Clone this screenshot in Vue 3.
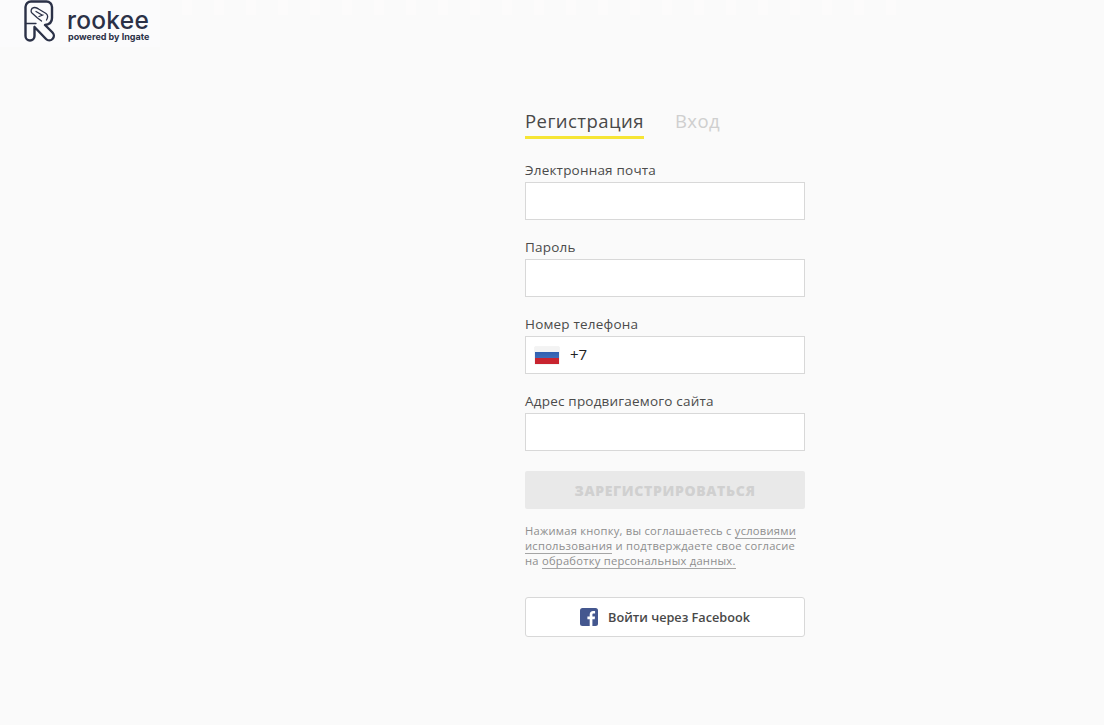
<script setup>
const fields = [
  { label: 'Электронная почта' },
  { label: 'Пароль' },
  { label: 'Номер телефона', phone: true },
  { label: 'Адрес продвигаемого сайта' }
]
</script>

<template>
  <div class="page">
    <div class="stripes"></div>
    <header class="logo">
      <svg class="mark" width="32" height="43" viewBox="0 0 32 43" fill="none" stroke="#2b3147" stroke-width="2.400" stroke-linecap="round" stroke-linejoin="round">
        <path d="M10.500 27V36a4.500 4.500 0 0 1-9 0V7A5.500 5.500 0 0 1 7 1.500H22.500A5.500 5.500 0 0 1 28 7V18c0 4-2.500 6.500-7 7l7.500 7.500a4.500 4.500 0 0 1-6.500 6.500L10.500 27"/>
        <path d="M8 8.500c2-1.500 5-.8 7 .8l7 4.200c2 1.500 2 4 .5 6.500M8 8.500c-1.500 2-1 4 .5 5l5 4.500 4 3" stroke-width="1.300"/>
        <path d="M12 11.500l6 3.500M15 16.500l4-1.500M1.500 23.500H12" stroke-width="1.300"/>
      </svg>
      <div class="brand">
        <div class="word">rookee</div>
        <div class="sub">powered by Ingate</div>
      </div>
    </header>

    <main class="form">
      <nav class="tabs">
        <span class="tab active">Регистрация</span>
        <span class="tab">Вход</span>
      </nav>

      <div v-for="f in fields" :key="f.label" class="field">
        <div class="label">{{ f.label }}</div>
        <div class="input" :class="{ phone: f.phone }">
          <template v-if="f.phone">
            <span class="flag"><i class="w"></i><i class="b"></i><i class="r"></i></span>
            <span class="code">+7</span>
          </template>
        </div>
      </div>

      <button class="submit" type="button">ЗАРЕГИСТРИРОВАТЬСЯ</button>

      <p class="terms">
        Нажимая кнопку, вы соглашаетесь с <a>условиями использования</a> и подтверждаете свое согласие на <a>обработку персональных данных.</a>
      </p>

      <button class="fb" type="button">
        <svg width="18" height="18" viewBox="0 0 18 18">
          <rect width="18" height="18" rx="2.500" fill="#44578f"/>
          <path d="M12.400 18v-6.800h2.300l.35-2.700H12.400V6.900c0-.8.220-1.300 1.300-1.300h1.400V3.200c-.25 0-1.100-.1-2-.1-2 0-3.400 1.200-3.400 3.500v1.900H7.400v2.700h2.300V18z" fill="#fff"/>
        </svg>
        <span>Войти через Facebook</span>
      </button>
    </main>
  </div>
</template>

<style>
html, body { margin: 0; background: #fafafa; }
</style>

<style scoped>
.page {
  height: 725px;
  background: #fafafa;
  font-family: "Open Sans", "Noto Sans", sans-serif;
  overflow: hidden;
  position: relative;
}
.stripes {
  position: absolute;
  top: 0;
  left: 160px;
  width: 740px;
  height: 15px;
  background: repeating-linear-gradient(90deg, #fafafa 0, #fafafa 22px, #fcfbfb 22px, #fcfbfb 32px);
}
.logo {
  height: 47px;
  width: 160px;
  background: #fbfbfc;
  display: flex;
  box-sizing: border-box;
  padding-left: 24px;
  align-items: flex-start;
}
.mark { flex: none; }
.brand { margin-left: 11px; padding-top: 9px; color: #2b3147; }
.word {
  font-family: "Inter", sans-serif;
  font-size: 24.500px;
  line-height: 23px;
  font-weight: 500;
  letter-spacing: 0.25px;
}
.sub {
  font-family: "Inter", sans-serif;
  font-size: 9px;
  line-height: 10px;
  font-weight: 700;
  margin-left: 1px;
  white-space: nowrap;
}
.form {
  width: 280px;
  margin: 62px 0 0 525px;
  display: flex;
  flex-direction: column;
}
.tabs {
  display: flex;
  gap: 31px;
  height: 28px;
}
.tab {
  font-size: 18.500px;
  line-height: 24px;
  letter-spacing: 0.45px;
  color: #cfcfcf;
  height: 30px;
  box-sizing: border-box;
  white-space: nowrap;
}
.tab.active {
  color: #484848;
  border-bottom: 3px solid #f6e535;
}
.field { height: 77px; }
.tabs + .field { margin-top: 25px; }
.label {
  font-size: 13.500px;
  line-height: 17px;
  letter-spacing: 0.2px;
  color: #4b4b4b;
  height: 20px;
  white-space: nowrap;
}
.input {
  height: 38px;
  box-sizing: border-box;
  background: #fff;
  border: 1px solid #d8d8d8;
  display: flex;
  align-items: center;
}
.flag {
  width: 24px;
  height: 17px;
  margin-left: 9px;
  display: flex;
  flex-direction: column;
  box-shadow: 0 0 1px #bbb;
}
.flag i { flex: 1; display: block; }
.flag .w { background: #f3f3f3; }
.flag .b { background: linear-gradient(#2f5fb0, #3d6bb8); }
.flag .r { background: #c8242f; }
.code {
  margin-left: 11px;
  font-size: 15px;
  color: #222;
  margin-top: -2px;
}
.submit {
  width: 280px;
  height: 38px;
  margin-top: 1px;
  border: 0;
  border-radius: 2px;
  background: #e9e9e9;
  color: #d0d0d0;
  font-family: "Open Sans", sans-serif;
  font-size: 14px;
  font-weight: 800;
  letter-spacing: 0.65px;
  padding: 0;
}
.terms {
  margin: 14px 0 0;
  font-size: 11.200px;
  line-height: 15px;
  letter-spacing: 0.24px;
  color: #8e8e8e;
  height: 45px;
}
.terms a {
  border-bottom: 1px solid #a5a5a5;
}
.fb {
  margin-top: 29px;
  width: 280px;
  height: 40px;
  border: 1px solid #d8d8d8;
  border-radius: 3px;
  background: #fff;
  display: flex;
  align-items: center;
  justify-content: center;
  gap: 10px;
  padding: 0;
  font-family: "Open Sans", sans-serif;
  font-size: 12.700px;
  font-weight: 600;
  color: #484848;
}
</style>
